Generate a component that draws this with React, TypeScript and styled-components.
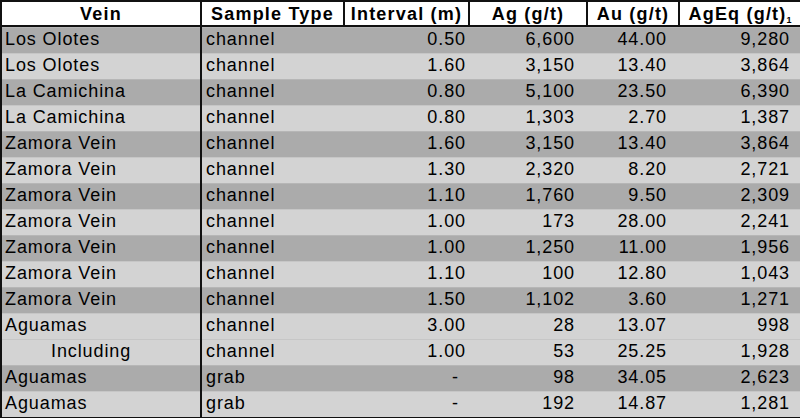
import React from "react";
import styled, { createGlobalStyle } from "styled-components";

const GlobalStyle = createGlobalStyle`
  html, body {
    margin: 0;
    padding: 0;
    background: #ffffff;
  }
  body {
    font-family: "Liberation Sans", Arial, sans-serif;
  }
`;

type Row = {
  vein: string;
  type: string;
  interval: string;
  ag: string;
  au: string;
  ageq: string;
  indent?: boolean;
  shade: "dark" | "light";
};

const rows: Row[] = [
  { vein: "Los Olotes", type: "channel", interval: "0.50", ag: "6,600", au: "44.00", ageq: "9,280", shade: "dark" },
  { vein: "Los Olotes", type: "channel", interval: "1.60", ag: "3,150", au: "13.40", ageq: "3,864", shade: "light" },
  { vein: "La Camichina", type: "channel", interval: "0.80", ag: "5,100", au: "23.50", ageq: "6,390", shade: "dark" },
  { vein: "La Camichina", type: "channel", interval: "0.80", ag: "1,303", au: "2.70", ageq: "1,387", shade: "light" },
  { vein: "Zamora Vein", type: "channel", interval: "1.60", ag: "3,150", au: "13.40", ageq: "3,864", shade: "dark" },
  { vein: "Zamora Vein", type: "channel", interval: "1.30", ag: "2,320", au: "8.20", ageq: "2,721", shade: "light" },
  { vein: "Zamora Vein", type: "channel", interval: "1.10", ag: "1,760", au: "9.50", ageq: "2,309", shade: "dark" },
  { vein: "Zamora Vein", type: "channel", interval: "1.00", ag: "173", au: "28.00", ageq: "2,241", shade: "light" },
  { vein: "Zamora Vein", type: "channel", interval: "1.00", ag: "1,250", au: "11.00", ageq: "1,956", shade: "dark" },
  { vein: "Zamora Vein", type: "channel", interval: "1.10", ag: "100", au: "12.80", ageq: "1,043", shade: "light" },
  { vein: "Zamora Vein", type: "channel", interval: "1.50", ag: "1,102", au: "3.60", ageq: "1,271", shade: "dark" },
  { vein: "Aguamas", type: "channel", interval: "3.00", ag: "28", au: "13.07", ageq: "998", shade: "light" },
  { vein: "Including", type: "channel", interval: "1.00", ag: "53", au: "25.25", ageq: "1,928", indent: true, shade: "light" },
  { vein: "Aguamas", type: "grab", interval: "-", ag: "98", au: "34.05", ageq: "2,623", shade: "dark" },
  { vein: "Aguamas", type: "grab", interval: "-", ag: "192", au: "14.87", ageq: "1,281", shade: "light" },
];

const Table = styled.table`
  width: 800px;
  table-layout: fixed;
  border-collapse: collapse;
  border: 2px solid #111;
  color: #000;
  font-size: 18px;
`;

const HeadRow = styled.tr`
  height: 25px;
`;

const HeadCell = styled.th`
  padding: 0;
  background: #ffffff;
  border: 2px solid #111;
  font-weight: bold;
  letter-spacing: 1.2px;
  text-align: center;
  white-space: nowrap;
  line-height: 22px;
`;

const Sub = styled.span`
  position: relative;
  top: 3px;
  font-size: 9px;
  letter-spacing: 0;
  line-height: 0;
`;

const BodyRow = styled.tr<{ $shade: "dark" | "light" }>`
  height: 26px;
  background: ${(p) => (p.$shade === "dark" ? "#ababab" : "#d3d3d3")};
`;

const Cell = styled.td<{
  $shade: "dark" | "light";
  $align?: "left" | "right";
  $pad?: number;
  $divider?: boolean;
}>`
  height: 26px;
  box-sizing: border-box;
  padding: 0 ${(p) => (p.$align === "right" ? p.$pad ?? 11 : 0)}px 2px
    ${(p) => (p.$align === "right" ? 0 : p.$pad ?? 3)}px;
  text-align: ${(p) => p.$align ?? "left"};
  letter-spacing: 0.9px;
  line-height: 24px;
  white-space: nowrap;
  border-right: ${(p) => (p.$divider ? "2px solid #111" : "none")};
  box-shadow: inset 0 1px 0 ${(p) => (p.$shade === "dark" ? "#b6b6b6" : "#c6c6c6")};
`;

export default function App() {
  return (
    <>
      <GlobalStyle />
      <Table>
        <colgroup>
          <col style={{ width: 200 }} />
          <col style={{ width: 143 }} />
          <col style={{ width: 125 }} />
          <col style={{ width: 118 }} />
          <col style={{ width: 92 }} />
          <col style={{ width: 122 }} />
        </colgroup>
        <thead>
          <HeadRow>
            <HeadCell>Vein</HeadCell>
            <HeadCell>Sample Type</HeadCell>
            <HeadCell>Interval (m)</HeadCell>
            <HeadCell>Ag (g/t)</HeadCell>
            <HeadCell>Au (g/t)</HeadCell>
            <HeadCell>
              AgEq (g/t)<Sub>1</Sub>
            </HeadCell>
          </HeadRow>
        </thead>
        <tbody>
          {rows.map((r, i) => (
            <BodyRow key={i} $shade={r.shade}>
              <Cell $shade={r.shade} $divider $pad={r.indent ? 49 : 3}>
                {r.vein}
              </Cell>
              <Cell $shade={r.shade} $pad={4}>
                {r.type}
              </Cell>
              <Cell $shade={r.shade} $align="right" $pad={r.interval === "-" ? 10 : 3}>
                {r.interval}
              </Cell>
              <Cell $shade={r.shade} $align="right" $pad={12}>
                {r.ag}
              </Cell>
              <Cell $shade={r.shade} $align="right" $pad={12}>
                {r.au}
              </Cell>
              <Cell $shade={r.shade} $align="right" $pad={10}>
                {r.ageq}
              </Cell>
            </BodyRow>
          ))}
        </tbody>
      </Table>
    </>
  );
}
